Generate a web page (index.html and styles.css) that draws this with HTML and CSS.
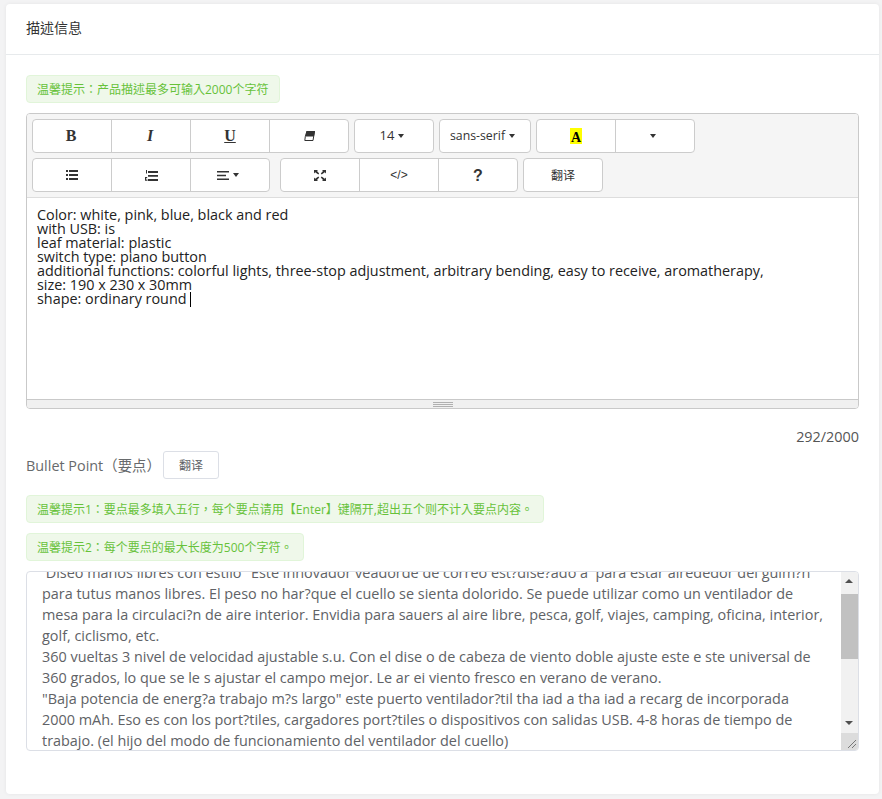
FILE: index.html
```html
<!DOCTYPE html>
<html lang="zh-TW">
<head>
<meta charset="utf-8">
<title>描述信息</title>
<link rel="stylesheet" href="styles.css">
</head>
<body>
<main class="card">
  <header class="card-head">描述信息</header>
  <div class="card-body">
    <div class="tip tip-first">温馨提示：产品描述最多可输入2000个字符</div>
    <section class="editor">
      <div class="toolbar">
        <div class="tool-row">
          <div class="group">
            <button class="btn b-bold">B</button>
            <button class="btn b-italic">I</button>
            <button class="btn b-under">U</button>
            <button class="btn"><svg width="11" height="10" viewBox="0 0 11 10"><path d="M2.800 0.500H10.500L9 9.500H0.800L1.300 5.500Z" fill="#fff" stroke="#333" stroke-width="1"/><path d="M2.500 0H11L10 5.500H1.500Z" fill="#333"/></svg></button>
          </div>
          <div class="group"><button class="btn b-size">14<span class="caret"></span></button></div>
          <div class="group"><button class="btn b-font">sans-serif<span class="caret"></span></button></div>
          <div class="group">
            <button class="btn"><span class="color-a">A</span></button>
            <button class="btn"><span class="caret caret-solo"></span></button>
          </div>
        </div>
        <div class="tool-row">
          <div class="group">
            <button class="btn"><svg width="12" height="10" viewBox="0 0 12 10"><path d="M0 0h2v2H0zM0 4h2v2H0zM0 8h2v2H0zM3 0h9v2H3zM3 4h9v2H3zM3 8h9v2H3z" fill="#333"/></svg></button>
            <button class="btn"><svg width="13" height="11" viewBox="0 0 13 11"><path d="M3 1h10v2H3zM3 5h10v1.800H3zM3 9h10v2H3zM1 0h1v3.500H1zM0 7h2.200v1.200H1V9.500h1.500V10.800H0z" fill="#333"/></svg></button>
            <button class="btn b-align"><svg width="12" height="9" viewBox="0 0 12 9"><path d="M0 0h12v1.500H0zM0 3.700h9v1.500H0zM0 7.500h12V9H0z" fill="#333"/></svg><span class="caret"></span></button>
          </div>
          <div class="group group-gap">
            <button class="btn"><svg width="12" height="11" viewBox="0 0 12 11"><path d="M0 0h4L3 1 5.200 3.600 4.300 4.500 1.200 2.200 0 3.400zM12 0H8L9 1 6.800 3.600 7.700 4.500 10.800 2.200 12 3.400zM0 11H4L3 10 5.200 7.400 4.300 6.500 1.200 8.800 0 7.600zM12 11H8L9 10 6.800 7.400 7.700 6.500 10.800 8.800 12 7.600z" fill="#333"/></svg></button>
            <button class="btn b-code">&lt;/&gt;</button>
            <button class="btn b-help">?</button>
          </div>
          <div class="group"><button class="btn b-trans">翻译</button></div>
        </div>
      </div>
      <div class="edit-area">Color: white, pink, blue, black and red<br>with USB: is<br>leaf material: plastic<br>switch type: piano button<br>additional functions: colorful lights, three-stop adjustment, arbitrary bending, easy to receive, aromatherapy,<br>size: 190 x 230 x 30mm<br>shape: ordinary round <span class="text-cursor"></span></div>
      <div class="status-bar"><span class="grip"></span></div>
    </section>
    <div class="counter">292/2000</div>
    <div class="bullet-head">
      <span class="bullet-label">Bullet Point（要点）</span>
      <button class="btn-plain">翻译</button>
    </div>
    <div class="tip tip-one">温馨提示1：要点最多填入五行，每个要点请用【Enter】键隔开,超出五个则不计入要点内容。</div>
    <div class="tip tip-two">温馨提示2：每个要点的最大长度为500个字符。</div>
    <div class="textbox">
      <div class="textbox-text"><div class="textbox-inner"> Diseo manos libres con estilo" Este innovador veadorde de correo est?dise?ado a  para estar alrededor del guim?n
para tutus manos libres. El peso no har?que el cuello se sienta dolorido. Se puede utilizar como un ventilador de
mesa para la circulaci?n de aire interior. Envidia para sauers al aire libre, pesca, golf, viajes, camping, oficina, interior,
golf, ciclismo, etc.
360 vueltas 3 nivel de velocidad ajustable s.u. Con el dise o de cabeza de viento doble ajuste este e ste universal de
360 grados, lo que se le s ajustar el campo mejor. Le ar ei viento fresco en verano de verano.
"Baja potencia de energ?a trabajo m?s largo" este puerto ventilador?til tha iad a tha iad a recarg de incorporada
2000 mAh. Eso es con los port?tiles, cargadores port?tiles o dispositivos con salidas USB. 4-8 horas de tiempo de
trabajo. (el hijo del modo de funcionamiento del ventilador del cuello)</div></div>
      <div class="scrollbar">
        <span class="arrow arrow-up"></span>
        <div class="track"><div class="thumb"></div></div>
        <span class="arrow arrow-down"></span>
        <div class="resizer"><svg width="17" height="17" viewBox="0 0 17 17"><path d="M15 7 7 15M15 11 11 15" stroke="#777" stroke-width="1" fill="none"/></svg></div>
      </div>
    </div>
  </div>
</main>
</body>
</html>
```
FILE: styles.css
```css
* { box-sizing: border-box; }
html, body { margin: 0; height: 799px; overflow: hidden; }
body {
  background: #f3f3f4;
  padding: 4px 3px 5px 6px;
  font-family: "Open Sans", "Noto Sans CJK TC", sans-serif;
  font-size: 14px;
  color: #676a6c;
}
.card {
  height: 790px;
  background: #fff;
  border-radius: 4px;
  box-shadow: 0 0 4px rgba(0, 0, 0, .06);
}
.card-head {
  height: 51px;
  padding: 14px 20px 0;
  border-bottom: 1px solid #e7eaec;
  font-size: 14px;
  line-height: 20px;
  color: #333;
}
.card-body { padding: 20px 20px 0; }
.tip {
  height: 28px;
  padding: 0 10px;
  border: 1px solid #e1f5d9;
  border-radius: 4px;
  background: #eff8ea;
  color: #67c23a;
  font-size: 12px;
  line-height: 27px;
  white-space: nowrap;
}
.tip-first { width: 254px; margin-bottom: 10px; }
.tip-one { width: 518px; margin-bottom: 10px; }
.tip-two { width: 278px; margin-bottom: 10px; }
.editor {
  height: 296px;
  border: 1px solid #c9c9c9;
  border-radius: 4px;
  overflow: hidden;
}
.toolbar {
  height: 84px;
  padding: 5px 5px 0;
  background: #f5f5f5;
  border-bottom: 1px solid #ddd;
}
.tool-row { display: flex; gap: 5px; margin-bottom: 5px; }
.group {
  display: flex;
  height: 34px;
  background: #fff;
  border: 1px solid #ccc;
  border-radius: 4px;
}
.group-gap { margin-left: 5px; }
.btn {
  display: flex;
  align-items: center;
  justify-content: center;
  width: 79px;
  height: 32px;
  padding: 0;
  border: 0;
  border-left: 1px solid #ccc;
  background: transparent;
  font-family: "Open Sans", "Noto Sans CJK TC", sans-serif;
  font-size: 12px;
  color: #333;
}
.btn:first-child { width: 78px; border-left: 0; }
.b-bold, .b-italic, .b-under { padding-right: 2px; font-family: "Liberation Serif", serif; font-size: 16px; font-weight: 700; }
.b-under { padding-right: 0; }
.b-italic { font-style: italic; }
.b-under { text-decoration: underline; }
.b-size { padding: 0 4px 2px 0; font-size: 13px; }
.b-size .caret, .b-font .caret { margin-top: 2px; }
.b-font { width: 90px !important; padding: 0 5px 2px 0; font-size: 12.300px; }
.b-align { padding-right: 4px; }
.b-code { font-family: "Liberation Sans", sans-serif; font-size: 12px; }
.b-help { font-family: "Liberation Sans", sans-serif; font-size: 16px; font-weight: 700; padding-top: 2px; }
.caret {
  display: inline-block;
  margin-left: 4px;
  border-top: 4px solid #333;
  border-left: 3px solid transparent;
  border-right: 3px solid transparent;
}
.caret-solo { margin: 0 5px 0 0; }
.color-a {
  display: block;
  width: 12px;
  height: 16px;
  background: #ff0;
  color: #000;
  font-family: "Liberation Serif", serif;
  font-size: 14px;
  font-weight: 700;
  line-height: 19px;
  text-align: center;
}
.edit-area {
  height: 201px;
  padding: 10px;
  background: #fff;
  color: #222;
  font-size: 14.380px;
  line-height: 14px;
}
.text-cursor {
  display: inline-block;
  width: 1px;
  height: 15px;
  background: #000;
  vertical-align: -3px;
}
.status-bar {
  display: flex;
  align-items: center;
  justify-content: center;
  height: 10px;
  background: #f0f0f0;
  border-top: 1px solid #c9c9c9;
}
.grip {
  width: 20px;
  height: 5px;
  border-top: 1px solid #b0b0b0;
  border-bottom: 1px solid #b0b0b0;
  background: linear-gradient(#b0b0b0, #b0b0b0) center / 100% 1px no-repeat;
}
.counter {
  margin-top: 18px;
  height: 20px;
  font-size: 14.400px;
  line-height: 20px;
  text-align: right;
  color: #555;
}
.bullet-head {
  display: flex;
  align-items: center;
  height: 28px;
  margin: 4px 0 16px;
}
.bullet-label { width: 137px; padding-bottom: 2px; font-size: 14.400px; white-space: nowrap; }
.btn-plain {
  width: 56px;
  height: 28px;
  padding: 0;
  background: #fff;
  border: 1px solid #dcdfe6;
  border-radius: 3px;
  font-family: "Open Sans", "Noto Sans CJK TC", sans-serif;
  font-size: 12px;
  color: #606266;
}
.textbox {
  display: flex;
  height: 180px;
  border: 1px solid #dcdfe6;
  border-radius: 4px;
  overflow: hidden;
}
.textbox-text {
  flex: 1;
  min-width: 0;
  overflow: hidden;
  padding: 0 15px;
}
.textbox-inner {
  margin-top: -10px;
  font-size: 14.420px;
  line-height: 21px;
  white-space: pre;
  color: #606266;
}
.scrollbar {
  position: relative;
  flex: none;
  width: 17px;
  background: #f1f1f1;
}
.track { position: absolute; top: 17px; left: 0; right: 0; height: 129px; }
.thumb { height: 65px; margin-top: 5px; background: #c1c1c1; }
.arrow {
  position: absolute;
  left: 4px;
  border-left: 4px solid transparent;
  border-right: 4px solid transparent;
}
.arrow-up { top: 7px; border-bottom: 4px solid #505050; }
.arrow-down { top: 149px; border-top: 4px solid #505050; }
.resizer {
  position: absolute;
  left: 0;
  bottom: 0;
  width: 17px;
  height: 17px;
  background: #dcdcdc;
}
.resizer svg { display: block; }
```
